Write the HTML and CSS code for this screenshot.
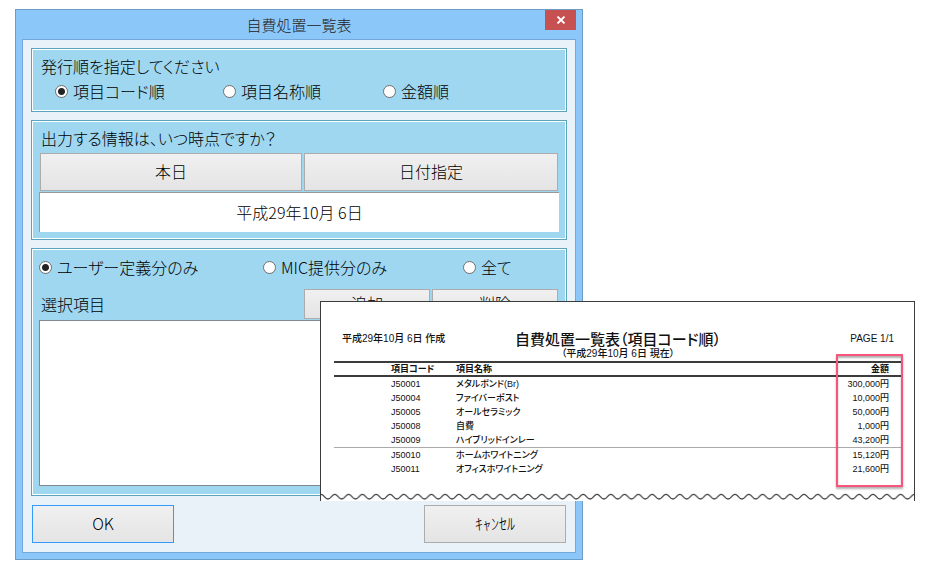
FILE: index.html
```
<!DOCTYPE html>
<html lang="ja">
<head>
    <meta charset="UTF-8">
    <meta name="viewport" content="width=device-width, initial-scale=1.0">
    <title>自費処置一覧表</title>
    <link rel="stylesheet" href="styles.css">
</head>
<body>
    <main class="stage">
        <form class="dialog">
            <header class="title-bar">
                <h1>自費処置一覧表</h1>
                <button type="button" class="close-button" aria-label="閉じる">
                    <svg width="10" height="8" viewBox="0 0 10 8" aria-hidden="true">
                        <path d="M1.5 0.5 L8.5 7.5 M8.5 0.5 L1.5 7.5" stroke="#fff" stroke-width="1.8" fill="none"/>
                    </svg>
                </button>
            </header>

            <div class="client">
                <section class="group order-group">
                    <h2>発行順を指定してください</h2>
                    <div class="radio-row indented">
                        <label><input type="radio" name="order" checked>項目コード順</label>
                        <label><input type="radio" name="order">項目名称順</label>
                        <label><input type="radio" name="order">金額順</label>
                    </div>
                </section>

                <section class="group date-group">
                    <h2>出力する情報は、いつ時点ですか？</h2>
                    <div class="date-buttons">
                        <button type="button" class="push-button">本日</button>
                        <button type="button" class="push-button">日付指定</button>
                    </div>
                    <input type="text" class="date-field" value="平成29年10月 6日" aria-label="時点" readonly>
                </section>

                <section class="group item-group">
                    <div class="radio-row">
                        <label><input type="radio" name="scope" checked>ユーザー定義分のみ</label>
                        <label><input type="radio" name="scope">MIC提供分のみ</label>
                        <label><input type="radio" name="scope">全て</label>
                    </div>
                    <div class="item-header">
                        <label for="items">選択項目</label>
                        <button type="button" class="push-button">追加</button>
                        <button type="button" class="push-button">削除</button>
                    </div>
                    <select id="items" class="item-list" size="8"></select>
                </section>

                <footer class="dialog-buttons">
                    <button type="submit" class="push-button default">OK</button>
                    <button type="button" class="push-button cancel">ｷｬﾝｾﾙ</button>
                </footer>
            </div>
        </form>

        <article class="sheet">
            <header class="sheet-header">
                <p class="created">平成29年10月 6日 作成</p>
                <div class="sheet-title">
                    <h2>自費処置一覧表（項目コード順）</h2>
                    <p>（平成29年10月 6日 現在）</p>
                </div>
                <p class="page-number">PAGE 1/1</p>
            </header>
            <div class="table-area">
                <table>
                    <thead>
                        <tr><th class="code">項目コード</th><th>項目名称</th><th class="amount">金額</th></tr>
                    </thead>
                    <tbody>
                        <tr><td class="code">J50001</td><td>メタルボンド(Br)</td><td class="amount">300,000円</td></tr>
                        <tr><td class="code">J50004</td><td>ファイバーポスト</td><td class="amount">10,000円</td></tr>
                        <tr><td class="code">J50005</td><td>オールセラミック</td><td class="amount">50,000円</td></tr>
                        <tr><td class="code">J50008</td><td>自費</td><td class="amount">1,000円</td></tr>
                        <tr><td class="code">J50009</td><td>ハイブリッドインレー</td><td class="amount">43,200円</td></tr>
                    </tbody>
                    <tbody class="next-block">
                        <tr><td class="code">J50010</td><td>ホームホワイトニング</td><td class="amount">15,120円</td></tr>
                        <tr><td class="code">J50011</td><td>オフィスホワイトニング</td><td class="amount">21,600円</td></tr>
                    </tbody>
                </table>
                <div class="highlight"></div>
            </div>
            <svg class="torn-edge" height="8" aria-hidden="true">
                <defs>
                    <pattern id="wave" width="13.8" height="8" patternUnits="userSpaceOnUse">
                        <path d="M-1 1.6 C-0.6 1.4 0.6 1.4 1 1.6 C3 2.4 4.4 6 6.9 6 C9.4 6 10.8 2.4 12.8 1.6 C13.2 1.4 14.4 1.4 14.8 1.6" fill="none" stroke="#444" stroke-width="1.3"/>
                    </pattern>
                </defs>
                <rect width="100%" height="8" fill="url(#wave)"/>
            </svg>
        </article>
    </main>
</body>
</html>
```
FILE: styles.css
```
* {
    box-sizing: border-box;
}
body {
    margin: 0;
    background: #fff;
    color: #000;
    font-family: "Noto Sans CJK JP", sans-serif;
    font-size: 16px;
    font-weight: 300;
    line-height: 20px;
    font-feature-settings: "palt";
}
h1, h2, p {
    margin: 0;
    font-weight: inherit;
}
button, input, select {
    font: inherit;
    font-feature-settings: inherit;
    color: inherit;
}

/* the printed sheet overlaps the right part of the dialog */
.stage {
    display: grid;
    grid-template-columns: 305fr 263fr 332fr;
    align-items: start;
    padding: 9px 15px 8px;
}
.dialog {
    grid-area: 1 / 1 / 2 / 3;
    padding: 0 6px 6px;
    border: 1px solid #6c9cc8;
    background: #8cc7fa;
}
.sheet {
    grid-area: 1 / 2 / 2 / 4;
    margin-top: 292px;
}

.title-bar {
    display: grid;
    grid-template-columns: 32px 1fr 32px;
    height: 29px;
}
.title-bar h1 {
    grid-column: 2;
    font-size: 15px;
    line-height: 30px;
    text-align: center;
    color: #222;
}
.close-button {
    display: flex;
    align-items: center;
    justify-content: center;
    justify-self: end;
    width: 31px;
    height: 20px;
    padding: 0;
    border: none;
    background: #c75050;
}
.client {
    display: flex;
    flex-direction: column;
    gap: 8px;
    padding: 8px 8px 9px;
    border: 1px solid #74a8dc;
    background: #eaf2f9;
}

.group {
    padding: 7px;
    border: 1px solid #5aa5bb;
    box-shadow: inset 0 0 0 1px #fff;
    background: #9fd7f1;
}
.group h2 {
    padding-left: 2px;
    font-size: 16px;
}
.order-group {
    padding-bottom: 10px;
}
.radio-row {
    display: grid;
    grid-template-columns: 224fr 200fr 96fr;
}
.radio-row.indented {
    grid-template-columns: 168fr 160fr 176fr;
    padding: 5px 0 0 16px;
}
.radio-row label {
    display: flex;
    align-items: center;
    gap: 5px;
    white-space: nowrap;
}
input[type="radio"] {
    appearance: none;
    flex: none;
    width: 13px;
    height: 13px;
    margin: 0;
    border: 1px solid #707070;
    border-radius: 50%;
    background: #fff;
}
input[type="radio"]:checked {
    background: radial-gradient(circle, #222 3px, #fff 4px);
}

.push-button {
    height: 38px;
    padding: 0 0 2px;
    border: 1px solid #acacac;
    background: linear-gradient(#f0f0f0, #e4e4e4);
    text-align: center;
}
.push-button.default {
    border-color: #3399ff;
}
.date-buttons {
    display: grid;
    grid-template-columns: 262fr 254fr;
    gap: 2px;
    padding: 5px 1px 1px;
}
.date-field {
    display: block;
    width: 100%;
    height: 40px;
    padding: 0 0 2px;
    border: solid #999;
    border-width: 1px 0 0 1px;
    background: #fff;
    text-align: center;
}
.item-header {
    display: grid;
    grid-template-columns: 262fr 126fr 126fr;
    column-gap: 2px;
    align-items: center;
    padding: 12px 1px 1px 2px;
}
.item-header .push-button {
    height: 30px;
}
.item-list {
    display: block;
    width: 100%;
    height: 166px;
    border: 1px solid #828790;
    border-radius: 0;
    background: #fff;
}
.item-group {
    padding-top: 8px;
    padding-bottom: 9px;
}
.dialog-buttons {
    display: grid;
    grid-template-columns: 142fr 250fr 142fr;
    padding: 1px 1px 0;
}
.dialog-buttons .cancel {
    grid-column: 3;
}

.sheet {
    display: flex;
    flex-direction: column;
    border: 1px solid #3c3c3c;
    border-bottom: none;
    background: #fff;
    color: #111;
    font-family: "Liberation Sans", "Noto Sans CJK JP", sans-serif;
    font-size: 9px;
    font-weight: 500;
    line-height: 14px;
}
.sheet-header {
    display: grid;
    grid-template-columns: 1fr auto 1fr;
    padding: 30px 20px 0 21px;
    font-size: 10px;
}
.sheet-title {
    text-align: center;
}
.sheet-title h2 {
    font-size: 15px;
    line-height: 16px;
}
.sheet-title p {
    line-height: 12px;
}
.page-number {
    text-align: right;
}
.table-area {
    position: relative;
    margin: 1px 12px 0 13px;
    padding-bottom: 17px;
}
table {
    width: 100%;
    border-collapse: collapse;
}
th, td {
    padding: 0;
    text-align: left;
}
thead th {
    height: 14px;
    border: solid #3c3c3c;
    border-width: 2px 0;
    line-height: 12px;
}
.code {
    width: 122px;
    padding-left: 57px;
}
.amount {
    padding-right: 13px;
    text-align: right;
}
.next-block {
    border-top: 1px solid #aaa;
}
.highlight {
    position: absolute;
    top: -7px;
    right: -1px;
    width: 67px;
    height: 133px;
    border: 2px solid #f9547c;
    box-shadow: 0 2px 2px rgba(0,0,0,0.3), inset 0 2px 2px rgba(0,0,0,0.3);
}
.torn-edge {
    display: block;
    width: 100%;
}
```
